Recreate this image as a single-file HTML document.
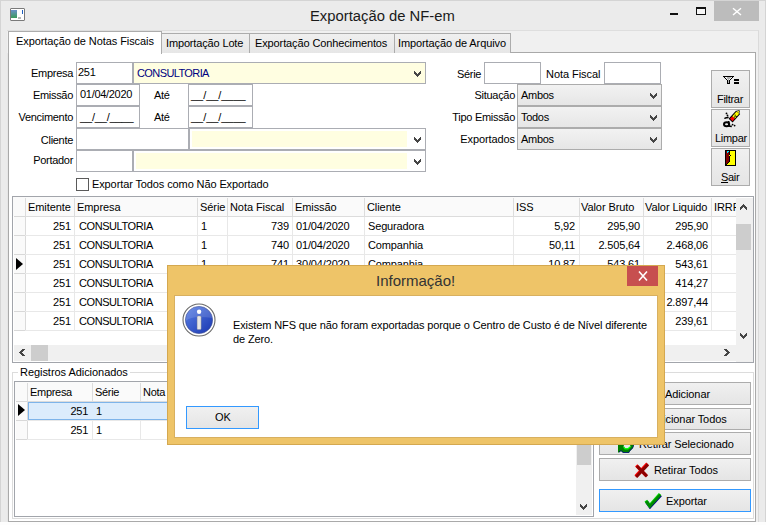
<!DOCTYPE html>
<html><head><meta charset="utf-8">
<style>
*{box-sizing:border-box;margin:0;padding:0}
html,body{width:766px;height:525px;overflow:hidden;background:#fdfdfd}
body{position:relative;font-family:"Liberation Sans",sans-serif;font-size:11px;color:#000}
.a{position:absolute}
.t{position:absolute;white-space:nowrap;line-height:13px;letter-spacing:-0.3px;font-size:11px}
.r{text-align:right}
.in{position:absolute;background:#fff;border:1px solid #abadb3}
.yl{background:#fffee1}
.cb{position:absolute;border:1px solid #acacac;background:linear-gradient(#f2f2f2,#e6e6e6)}
.btn{position:absolute;border:1px solid #acacac;background:linear-gradient(#f0f0f0,#e5e5e5)}
.chev{position:absolute;width:9px;height:6px}
.gl{position:absolute;background:#e5e5e5}
</style></head><body>
<!-- window frame -->
<div class="a" style="left:0;top:0;width:766px;height:522px;border:1px solid #d4d4d4;border-bottom:none;background:#ebebeb"></div>
<!-- title icon -->
<div class="a" style="left:10px;top:8px;width:15px;height:13px;border:1px solid #7a7a7a;background:#fff;border-radius:1px"></div>
<div class="a" style="left:11px;top:10px;width:6px;height:8px;background:linear-gradient(#6a8fc8,#3a9a5a)"></div>
<div class="a" style="left:22px;top:10px;width:1px;height:4px;background:#2060c0"></div><div class="a" style="left:18px;top:17px;width:3px;height:2px;background:#b8b8b8"></div>
<div class="t" style="left:310px;top:7px;font-size:15.5px;line-height:18px;letter-spacing:0;color:#1a1a1a;transform:scaleX(0.955);transform-origin:0 0">Exportação de NF-em</div>
<!-- window buttons -->
<div class="a" style="left:670px;top:13px;width:8px;height:2px;background:#111"></div>
<div class="a" style="left:696px;top:7px;width:10px;height:8px;border:1px solid #111;border-top-width:2px;background:#f6f6f6"></div>
<div class="a" style="left:714px;top:1px;width:45px;height:20px;background:#bcbcbc"></div>
<svg class="a" style="left:732px;top:7px" width="10" height="9" viewBox="0 0 10 9"><path d="M1 1.2 L9 8 M9 1.2 L1 8" stroke="#fff" stroke-width="1.4"/></svg>
<!-- client area -->
<div class="a" style="left:7px;top:30px;width:752px;height:492px;background:#f0f0f0;border-top:1px solid #dedede;border-right:1px solid #dadada"></div>
<div class="a" style="left:7px;top:53px;width:1px;height:469px;background:#e6e6e6"></div>
<!-- panel -->
<div class="a" style="left:8px;top:52px;width:748px;height:470px;border:1px solid #a9a9a9;background:#fff"></div>
<!-- tabs -->
<div class="a" style="left:161px;top:33px;width:89px;height:20px;border:1px solid #acacac;border-bottom:none;background:linear-gradient(#f0f0f0,#e6e6e6)"></div>
<div class="a" style="left:249px;top:33px;width:146px;height:20px;border:1px solid #acacac;border-bottom:none;background:linear-gradient(#f0f0f0,#e6e6e6)"></div>
<div class="a" style="left:394px;top:33px;width:117px;height:20px;border:1px solid #acacac;border-bottom:none;background:linear-gradient(#f0f0f0,#e6e6e6)"></div>
<div class="a" style="left:8px;top:31px;width:154px;height:23px;border:1px solid #acacac;border-bottom:none;background:#fff"></div>
<div class="t" style="left:16px;top:35px;letter-spacing:-0.08px">Exportação de Notas Fiscais</div>
<div class="t" style="left:166px;top:37px;letter-spacing:-0.15px">Importação Lote</div>
<div class="t" style="left:255px;top:37px;letter-spacing:-0.12px">Exportação Conhecimentos</div>
<div class="t" style="left:398px;top:37px;letter-spacing:-0.1px">Importação de Arquivo</div>

<!-- form left -->
<div class="t r" style="left:20px;width:53px;top:67px">Empresa</div>
<div class="in" style="left:76px;top:62px;width:57px;height:22px"></div>
<div class="t" style="left:78px;top:66px">251</div>
<div class="in yl" style="left:133px;top:62px;width:293px;height:22px"></div>
<div class="t" style="left:137px;top:67px;color:#000080;letter-spacing:-0.6px">CONSULTORIA</div>
<svg class="a" style="left:414px;top:71px" width="7" height="6" shape-rendering="crispEdges"><rect x="0" y="0" width="1" height="1" fill="#454545"/><rect x="6" y="0" width="1" height="1" fill="#454545"/><rect x="0" y="1" width="2" height="1" fill="#454545"/><rect x="5" y="1" width="2" height="1" fill="#454545"/><rect x="0" y="2" width="3" height="1" fill="#454545"/><rect x="4" y="2" width="3" height="1" fill="#454545"/><rect x="1" y="3" width="5" height="1" fill="#454545"/><rect x="2" y="4" width="3" height="1" fill="#454545"/><rect x="3" y="5" width="1" height="1" fill="#454545"/></svg>

<div class="t r" style="left:20px;width:53px;top:89px">Emissão</div>
<div class="in" style="left:76px;top:84px;width:64px;height:22px"></div>
<div class="t" style="left:80px;top:88px">01/04/2020</div>
<div class="t" style="left:154px;top:89px">Até</div>
<div class="in" style="left:188px;top:84px;width:65px;height:22px"></div>
<div class="t" style="left:191px;top:89px;letter-spacing:-0.05px">__/__/____</div>

<div class="t r" style="left:10px;width:63px;top:111px">Vencimento</div>
<div class="in" style="left:76px;top:106px;width:64px;height:22px"></div>
<div class="t" style="left:80px;top:111px;letter-spacing:-0.15px">__/__/____</div>
<div class="t" style="left:154px;top:111px">Até</div>
<div class="in" style="left:188px;top:106px;width:65px;height:22px"></div>
<div class="t" style="left:191px;top:111px;letter-spacing:-0.05px">__/__/____</div>

<div class="t r" style="left:20px;width:53px;top:134px">Cliente</div>
<div class="in" style="left:76px;top:128px;width:113px;height:22px"></div>
<div class="in" style="left:189px;top:128px;width:237px;height:22px"></div>
<div class="a yl" style="left:192px;top:131px;width:215px;height:16px"></div>
<svg class="a" style="left:414px;top:137px" width="7" height="6" shape-rendering="crispEdges"><rect x="0" y="0" width="1" height="1" fill="#454545"/><rect x="6" y="0" width="1" height="1" fill="#454545"/><rect x="0" y="1" width="2" height="1" fill="#454545"/><rect x="5" y="1" width="2" height="1" fill="#454545"/><rect x="0" y="2" width="3" height="1" fill="#454545"/><rect x="4" y="2" width="3" height="1" fill="#454545"/><rect x="1" y="3" width="5" height="1" fill="#454545"/><rect x="2" y="4" width="3" height="1" fill="#454545"/><rect x="3" y="5" width="1" height="1" fill="#454545"/></svg>

<div class="t r" style="left:20px;width:53px;top:154px">Portador</div>
<div class="in" style="left:76px;top:150px;width:57px;height:22px"></div>
<div class="in" style="left:133px;top:150px;width:293px;height:22px"></div>
<div class="a yl" style="left:136px;top:153px;width:271px;height:16px"></div>
<svg class="a" style="left:414px;top:159px" width="7" height="6" shape-rendering="crispEdges"><rect x="0" y="0" width="1" height="1" fill="#454545"/><rect x="6" y="0" width="1" height="1" fill="#454545"/><rect x="0" y="1" width="2" height="1" fill="#454545"/><rect x="5" y="1" width="2" height="1" fill="#454545"/><rect x="0" y="2" width="3" height="1" fill="#454545"/><rect x="4" y="2" width="3" height="1" fill="#454545"/><rect x="1" y="3" width="5" height="1" fill="#454545"/><rect x="2" y="4" width="3" height="1" fill="#454545"/><rect x="3" y="5" width="1" height="1" fill="#454545"/></svg>

<div class="a" style="left:76px;top:178px;width:13px;height:13px;border:1px solid #5a5a5a;background:#fff"></div>
<div class="t" style="left:92px;top:178px;letter-spacing:-0.11px">Exportar Todos como Não Exportado</div>

<!-- form right -->
<div class="t" style="left:457px;top:68px">Série</div>
<div class="in" style="left:484px;top:62px;width:57px;height:22px"></div>
<div class="t" style="left:546px;top:68px;letter-spacing:-0.05px">Nota Fiscal</div>
<div class="in" style="left:604px;top:62px;width:57px;height:22px"></div>

<div class="t r" style="left:430px;width:85px;top:89px">Situação</div>
<div class="cb" style="left:517px;top:84px;width:145px;height:22px"></div>
<div class="t" style="left:521px;top:89px">Ambos</div>
<svg class="a" style="left:650px;top:93px" width="7" height="6" shape-rendering="crispEdges"><rect x="0" y="0" width="1" height="1" fill="#454545"/><rect x="6" y="0" width="1" height="1" fill="#454545"/><rect x="0" y="1" width="2" height="1" fill="#454545"/><rect x="5" y="1" width="2" height="1" fill="#454545"/><rect x="0" y="2" width="3" height="1" fill="#454545"/><rect x="4" y="2" width="3" height="1" fill="#454545"/><rect x="1" y="3" width="5" height="1" fill="#454545"/><rect x="2" y="4" width="3" height="1" fill="#454545"/><rect x="3" y="5" width="1" height="1" fill="#454545"/></svg>
<div class="t r" style="left:430px;width:85px;top:111px">Tipo Emissão</div>
<div class="cb" style="left:517px;top:106px;width:145px;height:22px"></div>
<div class="t" style="left:521px;top:111px">Todos</div>
<svg class="a" style="left:650px;top:115px" width="7" height="6" shape-rendering="crispEdges"><rect x="0" y="0" width="1" height="1" fill="#454545"/><rect x="6" y="0" width="1" height="1" fill="#454545"/><rect x="0" y="1" width="2" height="1" fill="#454545"/><rect x="5" y="1" width="2" height="1" fill="#454545"/><rect x="0" y="2" width="3" height="1" fill="#454545"/><rect x="4" y="2" width="3" height="1" fill="#454545"/><rect x="1" y="3" width="5" height="1" fill="#454545"/><rect x="2" y="4" width="3" height="1" fill="#454545"/><rect x="3" y="5" width="1" height="1" fill="#454545"/></svg>
<div class="t r" style="left:430px;width:85px;top:133px;letter-spacing:-0.1px">Exportados</div>
<div class="cb" style="left:517px;top:128px;width:145px;height:22px"></div>
<div class="t" style="left:521px;top:133px">Ambos</div>
<svg class="a" style="left:650px;top:137px" width="7" height="6" shape-rendering="crispEdges"><rect x="0" y="0" width="1" height="1" fill="#454545"/><rect x="6" y="0" width="1" height="1" fill="#454545"/><rect x="0" y="1" width="2" height="1" fill="#454545"/><rect x="5" y="1" width="2" height="1" fill="#454545"/><rect x="0" y="2" width="3" height="1" fill="#454545"/><rect x="4" y="2" width="3" height="1" fill="#454545"/><rect x="1" y="3" width="5" height="1" fill="#454545"/><rect x="2" y="4" width="3" height="1" fill="#454545"/><rect x="3" y="5" width="1" height="1" fill="#454545"/></svg>

<!-- side buttons -->
<div class="btn" style="left:711px;top:70px;width:39px;height:38px"></div>
<div class="t" style="left:717px;top:93px">Filtrar</div><svg class="a" style="left:723px;top:75px" width="11" height="9" shape-rendering="crispEdges"><rect x="0" y="1" width="11" height="1" fill="#000"/><rect x="1" y="2" width="1" height="1" fill="#000"/><rect x="2" y="2" width="2" height="1" fill="#f4f4f4"/><rect x="4" y="2" width="4" height="1" fill="#b0b0b0"/><rect x="8" y="2" width="1" height="1" fill="#f4f4f4"/><rect x="9" y="2" width="1" height="1" fill="#000"/><rect x="2" y="3" width="1" height="1" fill="#000"/><rect x="3" y="3" width="1" height="1" fill="#f4f4f4"/><rect x="4" y="3" width="3" height="1" fill="#b0b0b0"/><rect x="7" y="3" width="1" height="1" fill="#f4f4f4"/><rect x="8" y="3" width="1" height="1" fill="#000"/><rect x="3" y="4" width="1" height="1" fill="#000"/><rect x="4" y="4" width="1" height="1" fill="#f4f4f4"/><rect x="5" y="4" width="1" height="1" fill="#b0b0b0"/><rect x="6" y="4" width="1" height="1" fill="#f4f4f4"/><rect x="7" y="4" width="1" height="1" fill="#000"/><rect x="4" y="5" width="1" height="1" fill="#000"/><rect x="5" y="5" width="1" height="1" fill="#b0b0b0"/><rect x="6" y="5" width="1" height="1" fill="#000"/><rect x="4" y="6" width="1" height="1" fill="#000"/><rect x="5" y="6" width="1" height="1" fill="#b0b0b0"/><rect x="6" y="6" width="1" height="1" fill="#000"/><rect x="4" y="7" width="1" height="1" fill="#000"/><rect x="5" y="7" width="1" height="1" fill="#b0b0b0"/><rect x="6" y="7" width="1" height="1" fill="#000"/><rect x="4" y="8" width="3" height="1" fill="#000"/></svg><div class="a" style="left:734px;top:79px;width:5px;height:2px;background:#000"></div><div class="a" style="left:734px;top:82px;width:5px;height:2px;background:#000"></div>
<div class="btn" style="left:711px;top:109px;width:39px;height:38px"></div>
<div class="t" style="left:715px;top:132px">Limpar</div><svg class="a" style="left:722px;top:110px" width="19" height="19" viewBox="0 0 19 19">
<path d="M8.6 10.6 L16.2 2.2" stroke="#000" stroke-width="5.4"/>
<path d="M15 0.4 L17.6 0.2 L17.8 3 Z" fill="#000"/>
<path d="M9.3 10 L11.6 7.4" stroke="#ff0000" stroke-width="3.4"/>
<path d="M11.6 7.4 L15.9 2.6" stroke="#ffff00" stroke-width="3.4"/>
<path d="M15.4 1.2 L17 1 L17 2.8 Z" fill="#ffff00"/>
<rect x="12" y="6.5" width="1" height="1" fill="#000"/><rect x="13" y="5.5" width="1" height="1" fill="#000"/><rect x="12.5" y="4.5" width="1" height="1" fill="#222"/><rect x="14" y="6" width="1" height="1" fill="#222"/>
<circle cx="4.5" cy="3.4" r="0.9" fill="#000"/><circle cx="5.5" cy="5.5" r="0.9" fill="#000"/>
<path d="M2.6 8.8 Q3 7.4 5 7.8 L6.6 7.2" stroke="#000" stroke-width="1.5" fill="none"/>
<ellipse cx="4.6" cy="14.2" rx="2.6" ry="2" fill="none" stroke="#000" stroke-width="2"/>
<path d="M6.6 11 L7 16 L9.8 16.4" fill="none" stroke="#000" stroke-width="1.7"/>
<circle cx="10.6" cy="14.6" r="0.9" fill="#000"/><circle cx="12.6" cy="15.6" r="0.9" fill="#000"/>
</svg>
<div class="btn" style="left:711px;top:148px;width:39px;height:38px"></div>
<div class="t" style="left:721px;top:171px"><u>S</u>air</div><svg class="a" style="left:725px;top:150px" width="11" height="16" shape-rendering="crispEdges"><rect x="0" y="0" width="11" height="1" fill="#000"/><rect x="0" y="1" width="1" height="1" fill="#000"/><rect x="1" y="1" width="1" height="1" fill="#800000"/><rect x="2" y="1" width="2" height="1" fill="#00e8ff"/><rect x="4" y="1" width="1" height="1" fill="#000"/><rect x="5" y="1" width="5" height="1" fill="#ffff00"/><rect x="10" y="1" width="1" height="1" fill="#000"/><rect x="0" y="2" width="1" height="1" fill="#000"/><rect x="1" y="2" width="1" height="1" fill="#800000"/><rect x="2" y="2" width="1" height="1" fill="#00e8ff"/><rect x="3" y="2" width="1" height="1" fill="#800000"/><rect x="4" y="2" width="1" height="1" fill="#000"/><rect x="5" y="2" width="5" height="1" fill="#ffff00"/><rect x="10" y="2" width="1" height="1" fill="#000"/><rect x="0" y="3" width="1" height="1" fill="#000"/><rect x="1" y="3" width="3" height="1" fill="#800000"/><rect x="4" y="3" width="1" height="1" fill="#000"/><rect x="5" y="3" width="5" height="1" fill="#ffff00"/><rect x="10" y="3" width="1" height="1" fill="#000"/><rect x="0" y="4" width="1" height="1" fill="#000"/><rect x="1" y="4" width="3" height="1" fill="#800000"/><rect x="4" y="4" width="1" height="1" fill="#000"/><rect x="5" y="4" width="5" height="1" fill="#ffff00"/><rect x="10" y="4" width="1" height="1" fill="#000"/><rect x="0" y="5" width="1" height="1" fill="#000"/><rect x="1" y="5" width="3" height="1" fill="#800000"/><rect x="4" y="5" width="1" height="1" fill="#ffff00"/><rect x="5" y="5" width="1" height="1" fill="#000"/><rect x="6" y="5" width="4" height="1" fill="#ffff00"/><rect x="10" y="5" width="1" height="1" fill="#000"/><rect x="0" y="6" width="1" height="1" fill="#000"/><rect x="1" y="6" width="3" height="1" fill="#800000"/><rect x="4" y="6" width="1" height="1" fill="#000"/><rect x="5" y="6" width="5" height="1" fill="#ffff00"/><rect x="10" y="6" width="1" height="1" fill="#000"/><rect x="0" y="7" width="1" height="1" fill="#000"/><rect x="1" y="7" width="3" height="1" fill="#800000"/><rect x="4" y="7" width="1" height="1" fill="#000"/><rect x="5" y="7" width="5" height="1" fill="#ffff00"/><rect x="10" y="7" width="1" height="1" fill="#000"/><rect x="0" y="8" width="1" height="1" fill="#000"/><rect x="1" y="8" width="3" height="1" fill="#800000"/><rect x="4" y="8" width="1" height="1" fill="#000"/><rect x="5" y="8" width="5" height="1" fill="#ffff00"/><rect x="10" y="8" width="1" height="1" fill="#000"/><rect x="0" y="9" width="1" height="1" fill="#000"/><rect x="1" y="9" width="3" height="1" fill="#800000"/><rect x="4" y="9" width="1" height="1" fill="#000"/><rect x="5" y="9" width="5" height="1" fill="#ffff00"/><rect x="10" y="9" width="1" height="1" fill="#000"/><rect x="0" y="10" width="1" height="1" fill="#000"/><rect x="1" y="10" width="3" height="1" fill="#800000"/><rect x="4" y="10" width="1" height="1" fill="#000"/><rect x="5" y="10" width="5" height="1" fill="#ffff00"/><rect x="10" y="10" width="1" height="1" fill="#000"/><rect x="0" y="11" width="1" height="1" fill="#000"/><rect x="1" y="11" width="3" height="1" fill="#800000"/><rect x="4" y="11" width="1" height="1" fill="#000"/><rect x="5" y="11" width="5" height="1" fill="#ffff00"/><rect x="10" y="11" width="1" height="1" fill="#000"/><rect x="0" y="12" width="1" height="1" fill="#000"/><rect x="1" y="12" width="2" height="1" fill="#800000"/><rect x="3" y="12" width="1" height="1" fill="#000"/><rect x="4" y="12" width="6" height="1" fill="#ffff00"/><rect x="10" y="12" width="1" height="1" fill="#000"/><rect x="0" y="13" width="1" height="1" fill="#000"/><rect x="1" y="13" width="1" height="1" fill="#800000"/><rect x="2" y="13" width="1" height="1" fill="#000"/><rect x="3" y="13" width="7" height="1" fill="#ffff00"/><rect x="10" y="13" width="1" height="1" fill="#000"/><rect x="0" y="14" width="2" height="1" fill="#000"/><rect x="2" y="14" width="8" height="1" fill="#ffff00"/><rect x="10" y="14" width="1" height="1" fill="#000"/><rect x="0" y="15" width="11" height="1" fill="#000"/></svg>

<!-- grid1 -->
<div class="a" style="left:12px;top:196px;width:742px;height:167px;border:1px solid #a2a5ab;background:#fff"></div>
<div class="a" style="left:13px;top:197px;width:723px;height:19px;background:#fafafa"></div>
<div class="a" style="left:14px;top:217px;width:11px;height:113px;background:#fafafa"></div>
<div class="gl" style="left:25px;top:198px;width:1px;height:18px;background:#dcdcdc"></div>
<div class="gl" style="left:25px;top:216px;width:1px;height:115px;background:#dadada"></div>
<div class="gl" style="left:74px;top:198px;width:1px;height:18px;background:#dcdcdc"></div>
<div class="gl" style="left:74px;top:216px;width:1px;height:115px;background:#e8e8e8"></div>
<div class="gl" style="left:197px;top:198px;width:1px;height:18px;background:#dcdcdc"></div>
<div class="gl" style="left:197px;top:216px;width:1px;height:115px;background:#e8e8e8"></div>
<div class="gl" style="left:227px;top:198px;width:1px;height:18px;background:#dcdcdc"></div>
<div class="gl" style="left:227px;top:216px;width:1px;height:115px;background:#e8e8e8"></div>
<div class="gl" style="left:292px;top:198px;width:1px;height:18px;background:#dcdcdc"></div>
<div class="gl" style="left:292px;top:216px;width:1px;height:115px;background:#e8e8e8"></div>
<div class="gl" style="left:364px;top:198px;width:1px;height:18px;background:#dcdcdc"></div>
<div class="gl" style="left:364px;top:216px;width:1px;height:115px;background:#e8e8e8"></div>
<div class="gl" style="left:513px;top:198px;width:1px;height:18px;background:#dcdcdc"></div>
<div class="gl" style="left:513px;top:216px;width:1px;height:115px;background:#e8e8e8"></div>
<div class="gl" style="left:579px;top:198px;width:1px;height:18px;background:#dcdcdc"></div>
<div class="gl" style="left:579px;top:216px;width:1px;height:115px;background:#e8e8e8"></div>
<div class="gl" style="left:643px;top:198px;width:1px;height:18px;background:#dcdcdc"></div>
<div class="gl" style="left:643px;top:216px;width:1px;height:115px;background:#e8e8e8"></div>
<div class="gl" style="left:711px;top:198px;width:1px;height:18px;background:#dcdcdc"></div>
<div class="gl" style="left:711px;top:216px;width:1px;height:115px;background:#e8e8e8"></div>
<div class="gl" style="left:25px;top:216px;width:711px;height:1px;background:#dcdcdc"></div>
<div class="gl" style="left:14px;top:216px;width:11px;height:1px;background:#d8d8d8"></div>
<div class="gl" style="left:25px;top:235px;width:711px;height:1px;background:#e8e8e8"></div>
<div class="gl" style="left:14px;top:235px;width:11px;height:1px;background:#d8d8d8"></div>
<div class="gl" style="left:25px;top:254px;width:711px;height:1px;background:#e8e8e8"></div>
<div class="gl" style="left:14px;top:254px;width:11px;height:1px;background:#d8d8d8"></div>
<div class="gl" style="left:25px;top:273px;width:711px;height:1px;background:#e8e8e8"></div>
<div class="gl" style="left:14px;top:273px;width:11px;height:1px;background:#d8d8d8"></div>
<div class="gl" style="left:25px;top:292px;width:711px;height:1px;background:#e8e8e8"></div>
<div class="gl" style="left:14px;top:292px;width:11px;height:1px;background:#d8d8d8"></div>
<div class="gl" style="left:25px;top:311px;width:711px;height:1px;background:#e8e8e8"></div>
<div class="gl" style="left:14px;top:311px;width:11px;height:1px;background:#d8d8d8"></div>
<div class="gl" style="left:25px;top:330px;width:711px;height:1px;background:#e8e8e8"></div>
<div class="gl" style="left:14px;top:330px;width:11px;height:1px;background:#d8d8d8"></div>
<div class="t" style="left:28px;top:201px;letter-spacing:-0.08px">Emitente</div>
<div class="t" style="left:77px;top:201px;letter-spacing:-0.08px">Empresa</div>
<div class="t" style="left:200px;top:201px;letter-spacing:-0.08px">Série</div>
<div class="t" style="left:230px;top:201px;letter-spacing:-0.08px">Nota Fiscal</div>
<div class="t" style="left:295px;top:201px;letter-spacing:-0.08px">Emissão</div>
<div class="t" style="left:367px;top:201px;letter-spacing:-0.08px">Cliente</div>
<div class="t" style="left:516px;top:201px;letter-spacing:-0.08px">ISS</div>
<div class="t" style="left:581px;top:201px;letter-spacing:-0.08px">Valor Bruto</div>
<div class="t" style="left:645px;top:201px;letter-spacing:-0.08px">Valor Liquido</div>
<div class="t" style="left:714px;top:201px;letter-spacing:-0.08px">IRRF</div>
<div class="t r" style="letter-spacing:-0.15px;left:25px;width:46px;top:220px">251</div>
<div class="t" style="left:79px;letter-spacing:-0.42px;top:220px">CONSULTORIA</div>
<div class="t" style="letter-spacing:-0.15px;left:201px;top:220px">1</div>
<div class="t r" style="letter-spacing:-0.15px;left:228px;width:61px;top:220px">739</div>
<div class="t" style="letter-spacing:-0.15px;left:296px;top:220px">01/04/2020</div>
<div class="t" style="letter-spacing:-0.15px;left:368px;top:220px">Seguradora</div>
<div class="t r" style="letter-spacing:-0.15px;left:514px;width:61px;top:220px">5,92</div>
<div class="t r" style="letter-spacing:-0.15px;left:580px;width:60px;top:220px">295,90</div>
<div class="t r" style="letter-spacing:-0.15px;left:644px;width:64px;top:220px">295,90</div>
<div class="t r" style="letter-spacing:-0.15px;left:25px;width:46px;top:239px">251</div>
<div class="t" style="left:79px;letter-spacing:-0.42px;top:239px">CONSULTORIA</div>
<div class="t" style="letter-spacing:-0.15px;left:201px;top:239px">1</div>
<div class="t r" style="letter-spacing:-0.15px;left:228px;width:61px;top:239px">740</div>
<div class="t" style="letter-spacing:-0.15px;left:296px;top:239px">01/04/2020</div>
<div class="t" style="letter-spacing:-0.15px;left:368px;top:239px">Companhia</div>
<div class="t r" style="letter-spacing:-0.15px;left:514px;width:61px;top:239px">50,11</div>
<div class="t r" style="letter-spacing:-0.15px;left:580px;width:60px;top:239px">2.505,64</div>
<div class="t r" style="letter-spacing:-0.15px;left:644px;width:64px;top:239px">2.468,06</div>
<div class="t r" style="letter-spacing:-0.15px;left:25px;width:46px;top:258px">251</div>
<div class="t" style="left:79px;letter-spacing:-0.42px;top:258px">CONSULTORIA</div>
<div class="t" style="letter-spacing:-0.15px;left:201px;top:258px">1</div>
<div class="t r" style="letter-spacing:-0.15px;left:228px;width:61px;top:258px">741</div>
<div class="t" style="letter-spacing:-0.15px;left:296px;top:258px">30/04/2020</div>
<div class="t" style="letter-spacing:-0.15px;left:368px;top:258px">Companhia</div>
<div class="t r" style="letter-spacing:-0.15px;left:514px;width:61px;top:258px">10,87</div>
<div class="t r" style="letter-spacing:-0.15px;left:580px;width:60px;top:258px">543,61</div>
<div class="t r" style="letter-spacing:-0.15px;left:644px;width:64px;top:258px">543,61</div>
<div class="t r" style="letter-spacing:-0.15px;left:25px;width:46px;top:277px">251</div>
<div class="t" style="left:79px;letter-spacing:-0.42px;top:277px">CONSULTORIA</div>
<div class="t" style="letter-spacing:-0.15px;left:201px;top:277px">1</div>
<div class="t r" style="letter-spacing:-0.15px;left:228px;width:61px;top:277px">742</div>
<div class="t" style="letter-spacing:-0.15px;left:296px;top:277px">30/04/2020</div>
<div class="t" style="letter-spacing:-0.15px;left:368px;top:277px">Companhia</div>
<div class="t r" style="letter-spacing:-0.15px;left:514px;width:61px;top:277px">8,28</div>
<div class="t r" style="letter-spacing:-0.15px;left:580px;width:60px;top:277px">414,27</div>
<div class="t r" style="letter-spacing:-0.15px;left:644px;width:64px;top:277px">414,27</div>
<div class="t r" style="letter-spacing:-0.15px;left:25px;width:46px;top:296px">251</div>
<div class="t" style="left:79px;letter-spacing:-0.42px;top:296px">CONSULTORIA</div>
<div class="t" style="letter-spacing:-0.15px;left:201px;top:296px">1</div>
<div class="t r" style="letter-spacing:-0.15px;left:228px;width:61px;top:296px">743</div>
<div class="t" style="letter-spacing:-0.15px;left:296px;top:296px">30/04/2020</div>
<div class="t" style="letter-spacing:-0.15px;left:368px;top:296px">Companhia</div>
<div class="t r" style="letter-spacing:-0.15px;left:514px;width:61px;top:296px">58,94</div>
<div class="t r" style="letter-spacing:-0.15px;left:580px;width:60px;top:296px">2.947,44</div>
<div class="t r" style="letter-spacing:-0.15px;left:644px;width:64px;top:296px">2.897,44</div>
<div class="t r" style="letter-spacing:-0.15px;left:25px;width:46px;top:315px">251</div>
<div class="t" style="left:79px;letter-spacing:-0.42px;top:315px">CONSULTORIA</div>
<div class="t" style="letter-spacing:-0.15px;left:201px;top:315px">1</div>
<div class="t r" style="letter-spacing:-0.15px;left:228px;width:61px;top:315px">744</div>
<div class="t" style="letter-spacing:-0.15px;left:296px;top:315px">30/04/2020</div>
<div class="t" style="letter-spacing:-0.15px;left:368px;top:315px">Companhia</div>
<div class="t r" style="letter-spacing:-0.15px;left:514px;width:61px;top:315px">4,79</div>
<div class="t r" style="letter-spacing:-0.15px;left:580px;width:60px;top:315px">239,61</div>
<div class="t r" style="letter-spacing:-0.15px;left:644px;width:64px;top:315px">239,61</div>
<svg class="a" style="left:16px;top:258px" width="8" height="12"><path d="M0 0 L7 6 L0 12 Z" fill="#000"/></svg>
<div class="a" style="left:736px;top:197px;width:17px;height:1px;background:#fff"></div><div class="a" style="left:736px;top:198px;width:17px;height:164px;background:#f0f0f0"></div>
<div class="a" style="left:736px;top:224px;width:15px;height:26px;background:#cdcdcd"></div>
<svg class="a" style="left:740px;top:204px" width="7" height="6" shape-rendering="crispEdges"><rect x="3" y="0" width="1" height="1" fill="#454545"/><rect x="2" y="1" width="3" height="1" fill="#454545"/><rect x="1" y="2" width="5" height="1" fill="#454545"/><rect x="0" y="3" width="3" height="1" fill="#454545"/><rect x="4" y="3" width="3" height="1" fill="#454545"/><rect x="0" y="4" width="2" height="1" fill="#454545"/><rect x="5" y="4" width="2" height="1" fill="#454545"/><rect x="0" y="5" width="1" height="1" fill="#454545"/><rect x="6" y="5" width="1" height="1" fill="#454545"/></svg>
<svg class="a" style="left:740px;top:333px" width="7" height="6" shape-rendering="crispEdges"><rect x="0" y="0" width="1" height="1" fill="#454545"/><rect x="6" y="0" width="1" height="1" fill="#454545"/><rect x="0" y="1" width="2" height="1" fill="#454545"/><rect x="5" y="1" width="2" height="1" fill="#454545"/><rect x="0" y="2" width="3" height="1" fill="#454545"/><rect x="4" y="2" width="3" height="1" fill="#454545"/><rect x="1" y="3" width="5" height="1" fill="#454545"/><rect x="2" y="4" width="3" height="1" fill="#454545"/><rect x="3" y="5" width="1" height="1" fill="#454545"/></svg>
<div class="a" style="left:14px;top:345px;width:739px;height:16px;background:#f0f0f0"></div>
<div class="a" style="left:31px;top:345px;width:17px;height:16px;background:#cdcdcd"></div>
<svg class="a" style="left:19px;top:349px" width="6" height="7" shape-rendering="crispEdges"><rect x="3" y="0" width="3" height="1" fill="#454545"/><rect x="2" y="1" width="3" height="1" fill="#454545"/><rect x="1" y="2" width="3" height="1" fill="#454545"/><rect x="0" y="3" width="3" height="1" fill="#454545"/><rect x="1" y="4" width="3" height="1" fill="#454545"/><rect x="2" y="5" width="3" height="1" fill="#454545"/><rect x="3" y="6" width="3" height="1" fill="#454545"/></svg>
<svg class="a" style="left:724px;top:349px" width="6" height="7" shape-rendering="crispEdges"><rect x="0" y="0" width="3" height="1" fill="#454545"/><rect x="1" y="1" width="3" height="1" fill="#454545"/><rect x="2" y="2" width="3" height="1" fill="#454545"/><rect x="3" y="3" width="3" height="1" fill="#454545"/><rect x="2" y="4" width="3" height="1" fill="#454545"/><rect x="1" y="5" width="3" height="1" fill="#454545"/><rect x="0" y="6" width="3" height="1" fill="#454545"/></svg>

<!-- groupbox -->
<div class="a" style="left:12px;top:372px;width:742px;height:147px;border:1px solid #dcdcdc"></div>
<div class="a" style="left:18px;top:366px;width:112px;height:12px;background:#fff"></div>
<div class="t" style="left:20px;top:366px;letter-spacing:-0.05px">Registros Adicionados</div>
<!-- grid2 -->
<div class="a" style="left:14px;top:381px;width:580px;height:136px;border:1px solid #a2a5ab;background:#fff"></div>
<div class="a" style="left:15px;top:382px;width:561px;height:19px;background:#fafafa"></div>
<div class="a" style="left:16px;top:402px;width:11px;height:37px;background:#fafafa"></div>
<div class="gl" style="left:27px;top:383px;width:1px;height:18px;background:#dcdcdc"></div>
<div class="gl" style="left:27px;top:401px;width:1px;height:39px;background:#dadada"></div>
<div class="gl" style="left:92px;top:383px;width:1px;height:18px;background:#dcdcdc"></div>
<div class="gl" style="left:92px;top:401px;width:1px;height:39px;background:#e8e8e8"></div>
<div class="gl" style="left:140px;top:383px;width:1px;height:18px;background:#dcdcdc"></div>
<div class="gl" style="left:140px;top:401px;width:1px;height:39px;background:#e8e8e8"></div>
<div class="gl" style="left:27px;top:401px;width:549px;height:1px;background:#dcdcdc"></div>
<div class="gl" style="left:16px;top:401px;width:11px;height:1px;background:#d8d8d8"></div>
<div class="gl" style="left:27px;top:420px;width:549px;height:1px;background:#e8e8e8"></div>
<div class="gl" style="left:16px;top:420px;width:11px;height:1px;background:#d8d8d8"></div>
<div class="gl" style="left:27px;top:439px;width:549px;height:1px;background:#e8e8e8"></div>
<div class="gl" style="left:16px;top:439px;width:11px;height:1px;background:#d8d8d8"></div>
<div class="a" style="left:28px;top:402px;width:548px;height:18px;background:#dcecfc;border:1px solid #7eb4ea"></div>
<div class="t" style="left:30px;top:386px">Empresa</div>
<div class="t" style="left:95px;top:386px">Série</div>
<div class="t" style="left:143px;top:386px">Nota</div>
<div class="t r" style="left:28px;width:60px;top:405px">251</div>
<div class="t" style="left:96px;top:405px">1</div>
<div class="t r" style="left:28px;width:60px;top:424px">251</div>
<div class="t" style="left:96px;top:424px">1</div>
<svg class="a" style="left:18px;top:404px" width="8" height="12"><path d="M0 0 L7 6 L0 12 Z" fill="#000"/></svg>
<div class="a" style="left:576px;top:382px;width:16px;height:133px;background:#f0f0f0"></div>
<div class="a" style="left:577px;top:400px;width:14px;height:65px;background:#cdcdcd"></div>
<svg class="a" style="left:580px;top:504px" width="7" height="6" shape-rendering="crispEdges"><rect x="0" y="0" width="1" height="1" fill="#454545"/><rect x="6" y="0" width="1" height="1" fill="#454545"/><rect x="0" y="1" width="2" height="1" fill="#454545"/><rect x="5" y="1" width="2" height="1" fill="#454545"/><rect x="0" y="2" width="3" height="1" fill="#454545"/><rect x="4" y="2" width="3" height="1" fill="#454545"/><rect x="1" y="3" width="5" height="1" fill="#454545"/><rect x="2" y="4" width="3" height="1" fill="#454545"/><rect x="3" y="5" width="1" height="1" fill="#454545"/></svg>
<!-- bottom buttons -->
<div class="btn" style="left:599px;top:382px;width:152px;height:23px"></div>
<div class="t" style="left:665px;top:388px;letter-spacing:-0.1px">Adicionar</div>
<div class="btn" style="left:599px;top:408px;width:152px;height:22px"></div>
<div class="t" style="left:650px;top:413px;letter-spacing:-0.1px">Adicionar Todos</div>
<div class="btn" style="left:599px;top:432px;width:152px;height:23px"></div>
<svg class="a" style="left:617px;top:440px" width="18" height="14" viewBox="0 0 18 14">
<path d="M1 5 L7 5 L6.5 6.5 L8.2 8.6 L11 8.6 L13.6 6.4 L13 5 L17 5 L16 8 L13 11 L12 12.8 L6 12.8 L4 11 L2 12.4 L1 12.4 Z" fill="#008000"/>
<path d="M2 12.6 L4 11 L6 12.8 L12 12.8 L13 11 L16 8 L17 5 L16.2 5.2 L15.6 7.6 L12.6 10.6 L11.6 12 L6.4 12 L4 10.2 L2 11.6 Z" fill="#000080"/>
<path d="M6.6 6.8 L8 8.8 L11 8.8 L13.4 6.8" fill="none" stroke="#00ff00" stroke-width="1.2"/>
</svg><div class="t" style="left:639px;top:438px;letter-spacing:-0.1px">Retirar Selecionado</div>
<div class="btn" style="left:599px;top:458px;width:152px;height:23px"></div>
<svg class="a" style="left:634px;top:462px" width="16" height="17" viewBox="0 0 16 17">
<path d="M2.2 3.4 L12.4 13.8 M13.4 1.6 L1.6 14.4" stroke="#ff0000" stroke-width="3.2"/>
<path d="M2.9 4 L13 14.4 M14 2.4 L2.2 15" stroke="#8c0000" stroke-width="3"/>
</svg>
<div class="t" style="left:654px;top:464px;letter-spacing:-0.1px">Retirar Todos</div>
<div class="btn" style="left:599px;top:489px;width:152px;height:23px;border-color:#3399ff"></div>
<svg class="a" style="left:643px;top:491px" width="20" height="18" viewBox="0 0 20 18">
<path d="M3.4 10.6 L7 15.6 L17.6 4" fill="none" stroke="#000080" stroke-width="3.4"/>
<path d="M2.8 9.6 L6.6 14.8 L17 3" fill="none" stroke="#00e000" stroke-width="3.2"/>
<path d="M3.2 10.2 L6.9 15.2 L17.3 3.6" fill="none" stroke="#008800" stroke-width="2.6"/>
</svg>
<div class="t" style="left:666px;top:495px;letter-spacing:-0.1px">Exportar</div>

<!-- dialog -->
<div class="a" style="left:167px;top:265px;width:498px;height:180px;background:#eec468;border:1px solid #d4a850"></div>
<div class="a" style="left:174px;top:295px;width:484px;height:143px;background:#fff;border:1px solid #d8b060"></div>
<div class="t" style="left:376px;top:272px;font-size:15px;line-height:18px;letter-spacing:0;color:#333">Informação!</div>
<div class="a" style="left:627px;top:266px;width:31px;height:20px;background:#c74f4f"></div>
<svg class="a" style="left:636px;top:270px" width="14" height="12" viewBox="0 0 14 12"><path d="M3 1.5 L11 10.5 M11 1.5 L3 10.5" stroke="#fff" stroke-width="1.6"/></svg>
<svg class="a" style="left:182px;top:303px" width="34" height="34" viewBox="0 0 34 34">
<defs><linearGradient id="ig" x1="0" y1="0" x2="1" y2="1"><stop offset="0" stop-color="#5a82e6"/><stop offset="1" stop-color="#1a36b0"/></linearGradient></defs>
<circle cx="17" cy="17" r="16" fill="#fff" stroke="#6a6a6a" stroke-width="1.1"/>
<circle cx="17" cy="17" r="13.6" fill="url(#ig)" stroke="#3a4a90" stroke-width="0.6"/>
<path d="M3.6 18 Q10 12 30.5 15 Q29 5 17 3.4 Q4.5 4 3.6 18 Z" fill="#fff" opacity="0.13"/>
<circle cx="17.1" cy="8.8" r="2.2" fill="#fff"/>
<rect x="15.1" y="13" width="4" height="13.6" rx="1.2" fill="#e6e6e6" stroke="#888" stroke-width="0.4"/>
</svg>
<div class="t" style="left:233px;top:319px;letter-spacing:-0.12px">Existem NFS que não foram exportadas porque o Centro de Custo é de Nível diferente</div>
<div class="t" style="left:233px;top:333px;letter-spacing:-0.12px">de Zero.</div>
<div class="btn" style="left:186px;top:406px;width:73px;height:23px;border-color:#3399ff"></div>
<div class="t" style="left:215px;top:411px;letter-spacing:0">OK</div>
</body></html>
